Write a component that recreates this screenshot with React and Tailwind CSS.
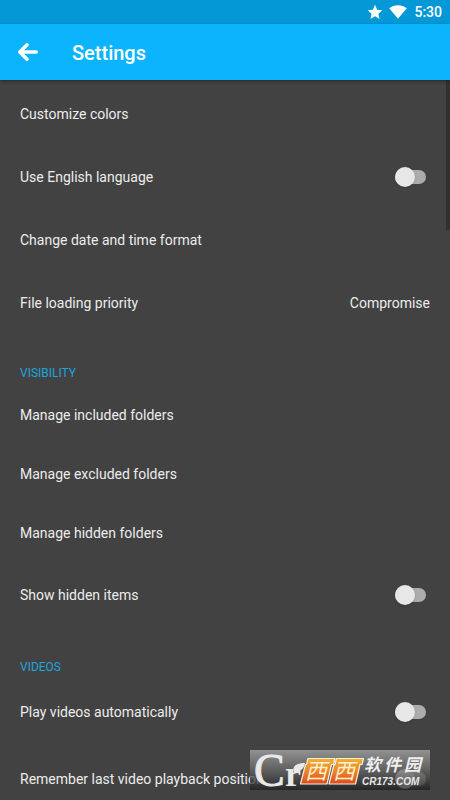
import { useState } from "react";
import { clsx } from "clsx";

const GROUPS = [
  {
    rows: [
      { label: "Customize colors", height: "h-[63px]" },
      { label: "Use English language", toggle: true, height: "h-[63px]" },
      { label: "Change date and time format", height: "h-[63px]" },
      { label: "File loading priority", value: "Compromise", height: "h-[63px]" },
    ],
  },
  {
    title: "Visibility",
    rows: [
      { label: "Manage included folders", height: "h-[59px]" },
      { label: "Manage excluded folders", height: "h-[59px]" },
      { label: "Manage hidden folders", height: "h-[59px]" },
      { label: "Show hidden items", toggle: true, height: "h-[66px]" },
    ],
  },
  {
    title: "Videos",
    rows: [
      { label: "Play videos automatically", toggle: true, height: "h-[66px]" },
      { label: "Remember last video playback position", toggle: true, height: "h-[68px]" },
    ],
  },
];

function StatusBar() {
  return (
    <div className="flex h-6 items-center justify-end bg-[#0499d6] pr-2 text-white">
      <svg viewBox="0 0 16 16" className="mr-1.5 size-4" fill="currentColor" aria-hidden="true">
        <path d="M8 .8l2.1 4.9 5.2.5-3.9 3.5 1.1 5.2L8 12.200l-4.500 2.700 1.100-5.200L.7 6.200l5.200-.5z" />
      </svg>
      <svg viewBox="0 0 18 14" className="mr-[7px] h-[14px] w-[18px]" fill="currentColor" aria-hidden="true">
        <path d="M9 13.800L.2 3.200C2.800 1.200 5.700.2 9 .2s6.200 1 8.800 3z" />
      </svg>
      <span className="text-sm font-medium">5:30</span>
    </div>
  );
}

function SettingRow({ row }) {
  const [on, setOn] = useState(false);
  const rowClass = clsx("flex w-full items-center justify-between px-5 text-left text-sm text-[#ececec]", row.height);

  if (row.toggle) {
    return (
      <label className={clsx(rowClass, "cursor-pointer")}>
        <span>{row.label}</span>
        <input
          type="checkbox"
          role="switch"
          checked={on}
          onChange={(e) => setOn(e.target.checked)}
          className="peer sr-only"
        />
        <span className="mr-1 flex h-[14px] w-[31px] items-center rounded-full bg-[#acacac] peer-checked:justify-end peer-checked:bg-[#0a7fb3]">
          <span className="size-5 shrink-0 rounded-full bg-[#e7e7e7] shadow-sm" />
        </span>
      </label>
    );
  }

  return (
    <button type="button" className={rowClass}>
      <span>{row.label}</span>
      {row.value ? <span>{row.value}</span> : null}
    </button>
  );
}

function Watermark() {
  return (
    <div className="pointer-events-none absolute right-5 bottom-[10px] h-10 w-[180px]">
      <svg viewBox="0 0 180 40" className="size-full overflow-visible">
        <defs>
          <linearGradient id="plate" x1="0" y1="0" x2="0" y2="1">
            <stop offset="0" stopColor="#adadad" />
            <stop offset="0.5" stopColor="#6a6a6a" />
            <stop offset="1" stopColor="#1d1d1d" />
          </linearGradient>
          <linearGradient id="tile" x1="0" y1="0" x2="0" y2="1">
            <stop offset="0" stopColor="#f0b030" />
            <stop offset="0.5" stopColor="#ee8428" />
            <stop offset="1" stopColor="#dc4a20" />
          </linearGradient>
        </defs>
        <rect width="180" height="40" fill="url(#plate)" fillOpacity="0.75" />
        <g fill="#e9e9e9" fontFamily="'Liberation Serif', serif">
          <text x="4" y="36" fontSize="46" stroke="#e9e9e9" strokeWidth="1">
            C
          </text>
          <text x="35" y="36" fontSize="36" fontWeight="700">
            r
          </text>
        </g>
        <path d="M43 20c1-5 4-7 12-7-1 6-5 9-11 9z" fill="#e9e9e9" />
        <g fill="url(#tile)" stroke="#f7f0df" strokeWidth="1.2" strokeLinejoin="round">
          <path d="M58 8.500h27l-1.500 6h-2L77 34H50.500l5-19.500h1z" />
          <path d="M86.500 8.500h27l-1.500 6h-2L105.500 34H79l5-19.500h1z" />
        </g>
        <g fill="#fff0ce" fontFamily="'Noto Sans CJK SC', sans-serif" fontStyle="italic" fontSize="22">
          <text x="55" y="29">
            西
          </text>
          <text x="83" y="29">
            西
          </text>
        </g>
        <g fill="#eeeeee" fontFamily="'Noto Sans CJK SC', sans-serif" fontStyle="italic" fontWeight="700" fontSize="17">
          <text x="114" y="21">
            软
          </text>
          <text x="134" y="21">
            件
          </text>
          <text x="154" y="21">
            园
          </text>
        </g>
        <text x="112" y="35" fill="#e7e7e7" fontSize="10" fontWeight="700" fontStyle="italic" fontFamily="'Liberation Sans', sans-serif">
          CR173.COM
        </text>
      </svg>
    </div>
  );
}

export default function App() {
  return (
    <div className="relative flex h-screen flex-col overflow-hidden bg-[#424242] font-['Roboto',sans-serif]">
      <StatusBar />
      <header className="z-10 flex h-14 shrink-0 items-center bg-[#0bb4fc] px-4 text-white shadow-[0_1px_3px_rgba(0,0,0,0.4)]">
        <button type="button" aria-label="Back" className="flex size-6 items-center justify-center">
          <svg
            viewBox="0 0 24 24"
            className="size-6"
            fill="none"
            stroke="currentColor"
            strokeWidth="3.6"
            strokeLinecap="round"
            strokeLinejoin="round"
            aria-hidden="true"
          >
            <path d="M20.200 12H4.500M11 4.800L3.800 12l7.200 7.200" />
          </svg>
        </button>
        <h1 className="ml-8 pt-0.5 text-xl font-medium">Settings</h1>
      </header>

      <main className="relative min-h-0 flex-1 overflow-hidden pt-0.5">
        {GROUPS.map((group, i) => (
          <section key={group.title || i}>
            {group.title ? (
              <h2 className="px-5 pt-[29px] pb-0.5 text-xs leading-5 text-[#1ca6dc] uppercase">{group.title}</h2>
            ) : null}
            {group.rows.map((row) => (
              <SettingRow key={row.label} row={row} />
            ))}
          </section>
        ))}
        <div className="absolute top-0 right-0 h-[150px] w-1 bg-[#303030]" />
      </main>

      <Watermark />
    </div>
  );
}
